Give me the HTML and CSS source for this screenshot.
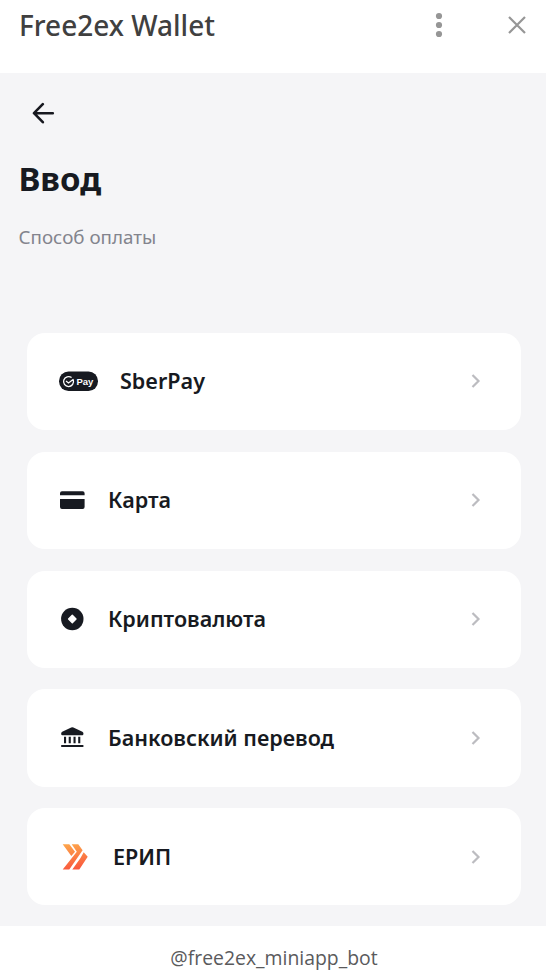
FILE: index.html
```html
<!DOCTYPE html>
<html lang="ru">
<head><meta charset="utf-8"><title>Free2ex Wallet</title><link rel="stylesheet" href="styles.css"></head>
<body>
<header class="top"><h1 class="app">Free2ex Wallet</h1>
<svg class="more" width="10" height="26" viewBox="0 0 10 26" fill="#969696"><circle cx="5" cy="4" r="3.1"/><circle cx="5" cy="13" r="3.1"/><circle cx="5" cy="22" r="3.1"/></svg>
<svg class="close" width="20" height="20" viewBox="0 0 20 20" fill="none" stroke="#969696" stroke-width="2.2"><path d="M2 2l16 16M18 2L2 18"/></svg></header>
<main class="content">
<svg class="back" width="24" height="22" viewBox="0 0 24 22" fill="none" stroke="#17181f" stroke-width="2.6" stroke-linecap="round" stroke-linejoin="round"><path d="M20.800 11.200H2M10.800 2.200L2 11.200l8.800 9"/></svg>
<h2 class="title">Ввод</h2>
<p class="sub">Способ оплаты</p>
<div class="list">
<div class="row raised"><svg class="icon" width="39" height="20" viewBox="0 0 39 20"><rect y="0.500" width="39" height="19.500" rx="9.500" fill="#171a21"/><path d="M14.300 9A5 5 0 1 1 12.600 6.600M7 10l2.500 1.900 5-3.700" fill="none" stroke="#fff" stroke-width="1.300"/><text x="17.500" y="13.800" class="pay">Pay</text></svg><span class="label">SberPay</span><svg class="chev" width="10" height="14" viewBox="0 0 10 14"><path d="M1.500 1l6 6-6 6"/></svg></div>
<div class="row"><svg class="icon" width="27" height="20" viewBox="0 0 27 20" fill="#171a21"><path d="M1 5.300V3.200q0-2 2-2h20.600q2 0 2 2v2.100zM1 9h24.600v8q0 2-2 2H3q-2 0-2-2z"/></svg><span class="label">Карта</span><svg class="chev" width="10" height="14" viewBox="0 0 10 14"><path d="M1.500 1l6 6-6 6"/></svg></div>
<div class="row"><svg class="icon" width="27" height="24" viewBox="0 0 27 24"><circle cx="13.300" cy="12" r="11.200" fill="#171a21"/><path d="M13.300 8.300l3.700 3.700-3.700 3.700L9.600 12z" fill="#fff" stroke="#fff" stroke-width="1.400" stroke-linejoin="round"/></svg><span class="label">Криптовалюта</span><svg class="chev" width="10" height="14" viewBox="0 0 10 14"><path d="M1.500 1l6 6-6 6"/></svg></div>
<div class="row"><svg class="icon" width="27" height="24" viewBox="0 0 27 24" fill="#171a21"><path d="M12.200 1.600q1.100-.6 2.200 0l9 4.100q1 .5 1 1.600v.8q0 1.200-1.200 1.200H3.400q-1.200 0-1.200-1.200v-.8q0-1.100 1-1.600zM2.200 19h22.200v2H2.200zM5 10.700h2.100v6.600H5zM9.700 10.700h2.100v6.600H9.700zM14.500 10.700h2.100v6.600h-2.100zM19.200 10.700h2.100v6.600h-2.100z"/></svg><span class="label">Банковский перевод</span><svg class="chev" width="10" height="14" viewBox="0 0 10 14"><path d="M1.500 1l6 6-6 6"/></svg></div>
<div class="row"><svg class="icon" width="32" height="28" viewBox="0 0 32 28"><defs><linearGradient id="g" gradientUnits="userSpaceOnUse" x1="12" y1="1" x2="16" y2="27"><stop stop-color="#fda44b"/><stop offset="1" stop-color="#f9553d"/></linearGradient></defs><path d="M3.700 1.200h6.600l5.700 7.500-3.700 4.300zM12.700 1.200h6.600l4.300 6L10.300 26.500H3.700L17.800 8.700zM24.700 9.300l4 4.500-8.400 12.700h-7L21.500 15z" fill="url(#g)"/></svg><span class="label">ЕРИП</span><svg class="chev" width="10" height="14" viewBox="0 0 10 14"><path d="M1.500 1l6 6-6 6"/></svg></div>
</div></main>
<footer class="foot">@free2ex_miniapp_bot</footer>
</body></html>
```
FILE: styles.css
```css
*{box-sizing:border-box}
body{margin:0;width:546px;height:970px;overflow:hidden;background:#fff;font-family:"Noto Sans","Open Sans",sans-serif;color:#171a21;display:flex;flex-direction:column}
.top{height:73px;display:flex;align-items:flex-start;padding:0 19px}
.app{margin:5px 0 0;font-size:28px;line-height:40px;font-weight:500;color:#404040;flex:1}
.more{margin:12px 63px 0 0}
.close{margin:15px 0 0 0}
.content{height:853px;background:#f5f5f7;display:flex;flex-direction:column;padding:0 25px 0 27px}
.back{margin:29px 0 0 5px}
.title{margin:33px 0 0 -8.500px;font-size:33px;line-height:44px;font-weight:700}
.sub{margin:23px 0 0 -8.500px;font-size:18.800px;line-height:26px;color:#83848d}
.list{display:grid;gap:21.600px;margin-top:83px}
.row{height:97.200px;border-radius:18px;background:#fff;display:flex;align-items:center;padding:0 40px 0 32px}
.raised{padding-bottom:1.200px}
.label{margin:0 0 1.300px 22px;flex:1;font-size:21.550px;font-weight:600}
.chev{fill:none;stroke:#bcbcc0;stroke-width:2.200}
.pay{font:600 9.500px "Liberation Sans",sans-serif;fill:#fff}
.foot{height:44px;padding-left:2px;text-align:center;font-family:"Open Sans",sans-serif;font-size:19.400px;line-height:64px;color:#5a5a5c}
```
